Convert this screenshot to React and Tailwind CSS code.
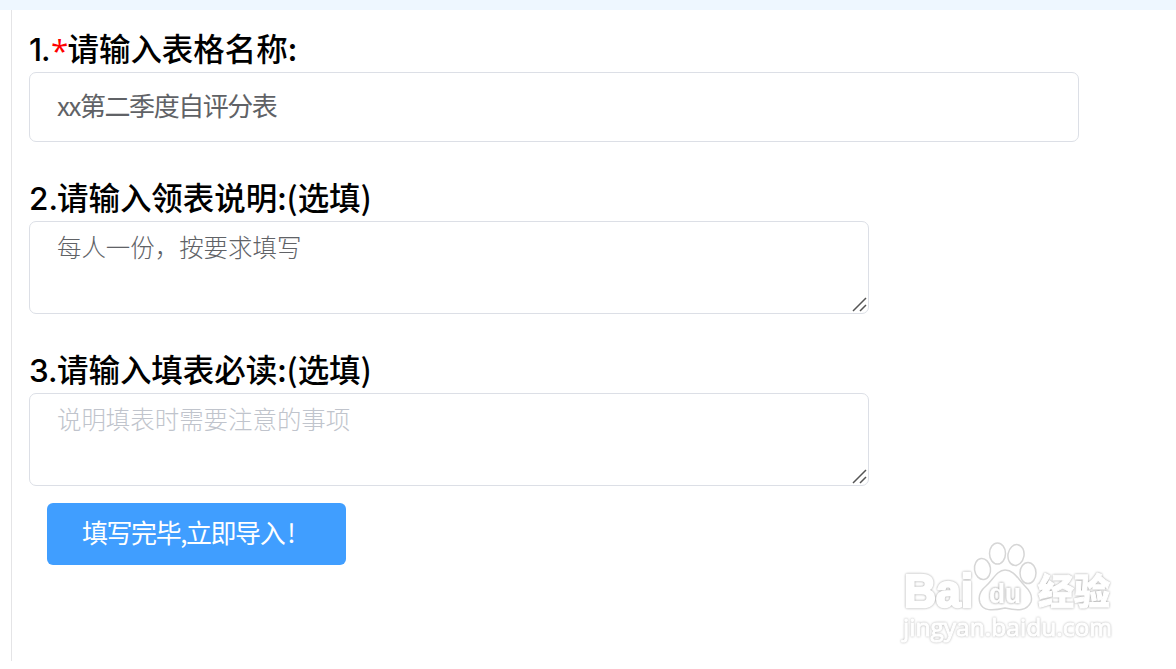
import { useState } from 'react';

const cjk = "font-['Noto_Sans_CJK_SC',sans-serif]";

function Label({ num, required, children }) {
  return (
    <label className="flex h-[45px] items-center text-[31.5px] leading-[42px] font-medium whitespace-nowrap text-black">
      <span className={required ? "w-[22px] font-['Inter',sans-serif] tracking-[-1px]" : "w-[28px] font-['Inter',sans-serif]"}>{num}.</span>
      {required && <span className="w-[16.5px] font-['Open_Sans',sans-serif] text-[#ff0000]">*</span>}
      <span className="pb-[5px] tracking-[-0.05px]">{children}</span>
    </label>
  );
}

function TextArea({ name, value, placeholder, onChange }) {
  return (
    <div className="relative h-[93px] w-[840px]">
      <textarea
        name={name}
        value={value}
        placeholder={placeholder}
        onChange={onChange}
        className="block h-full w-full resize-none overflow-hidden rounded-[7px] border border-[#dcdfe6] bg-white px-[27px] pt-[7px] text-[24.45px] leading-[36px] font-light text-[#606266] outline-none placeholder:text-[#c0c4cc]"
      />
      {/* resize grip */}
      <svg className="absolute right-[2px] bottom-[2px]" width="15" height="15" viewBox="0 0 15 15" fill="none" stroke="#555" strokeWidth="1.5">
        <path d="M1 14L14 1M8 14L14 8" />
      </svg>
    </div>
  );
}

function Watermark() {
  return (
    <svg className="absolute top-[535px] left-[895px]" width="225" height="115" viewBox="895 535 225 115" fill="#fff" stroke="#fff" strokeWidth="1" strokeLinejoin="round">
      <text className="font-['Liberation_Sans',sans-serif] drop-shadow-[0_0_1px_#a0a0a0]" x="904" y="607" fontSize="46" fontWeight="bold" strokeWidth="2.5" textLength="69" lengthAdjust="spacingAndGlyphs">Bai</text>
      <g stroke="#d6d6d6" strokeWidth="1.5">
        <ellipse cx="982.5" cy="569" rx="8" ry="10.5" transform="rotate(-8 982.5 569)" />
        <ellipse cx="997.5" cy="553.5" rx="8" ry="10.5" />
        <ellipse cx="1016" cy="555" rx="8" ry="10.5" transform="rotate(10 1016 555)" />
        <ellipse cx="1028" cy="573" rx="8" ry="10.5" />
        <path d="M1005 570C997 570 993 580 986 586C980 591 978 597 980 603C983 611 992 611 1005 608C1018 611 1027 611 1031 602C1033 595 1029 590 1024 585C1018 579 1014 570 1005 570Z" />
      </g>
      <text className="font-['Liberation_Sans',sans-serif] drop-shadow-[0_0_1px_#888]" x="989" y="603" fontSize="28" fontWeight="bold" strokeWidth="0.5" textLength="32" lengthAdjust="spacingAndGlyphs">du</text>
      <text className="font-['Noto_Sans_CJK_SC',sans-serif] drop-shadow-[0_0_1px_#a0a0a0]" x="1038" y="605" fontSize="36" fontWeight="900">经验</text>
      <text className="font-['Open_Sans',sans-serif] drop-shadow-[0_0_1px_#b4b4b4]" x="903" y="636" fontSize="24" fontWeight="500" textLength="209" lengthAdjust="spacingAndGlyphs">jingyan.baidu.com</text>
    </svg>
  );
}

export default function App() {
  const [form, setForm] = useState({
    title: 'xx第二季度自评分表',
    desc: '每人一份，按要求填写',
    notice: '',
  });

  const handleChange = (e) => {
    const { name, value } = e.target;
    setForm({ ...form, [name]: value });
  };

  return (
    <div className={`relative h-[669px] w-[1176px] overflow-hidden bg-white ${cjk}`}>
      <div className="h-[10px] bg-[#eef7ff]" />
      <main className="ml-[11px] h-[651px] border-l border-[#e4e4e6] pt-[17px] pl-[17px]">
        <Label num="1" required>请输入表格名称:</Label>
        <input
          name="title"
          value={form.title}
          onChange={handleChange}
          className="block h-[70px] w-[1050px] rounded-[7px] border border-[#dcdfe6] bg-white px-[27px] pb-[6px] text-[26px] tracking-[-1.45px] text-[#606266] outline-none"
        />

        <div className="mt-[34px]">
          <Label num="2">请输入领表说明:(选填)</Label>
          <TextArea name="desc" value={form.desc} onChange={handleChange} />
        </div>

        <div className="mt-[34px]">
          <Label num="3">请输入填表必读:(选填)</Label>
          <TextArea name="notice" value={form.notice} placeholder="说明填表时需要注意的事项" onChange={handleChange} />
        </div>

        <button className="mt-[17px] ml-[18px] block h-[62px] w-[299px] rounded-md bg-[#409eff] pb-[5px] pl-[35px] text-left text-[26px] tracking-[-1.45px] whitespace-nowrap text-white">
          填写完毕,立即导入<span className="ml-[3px]">!</span>
        </button>
      </main>
      <Watermark />
    </div>
  );
}
